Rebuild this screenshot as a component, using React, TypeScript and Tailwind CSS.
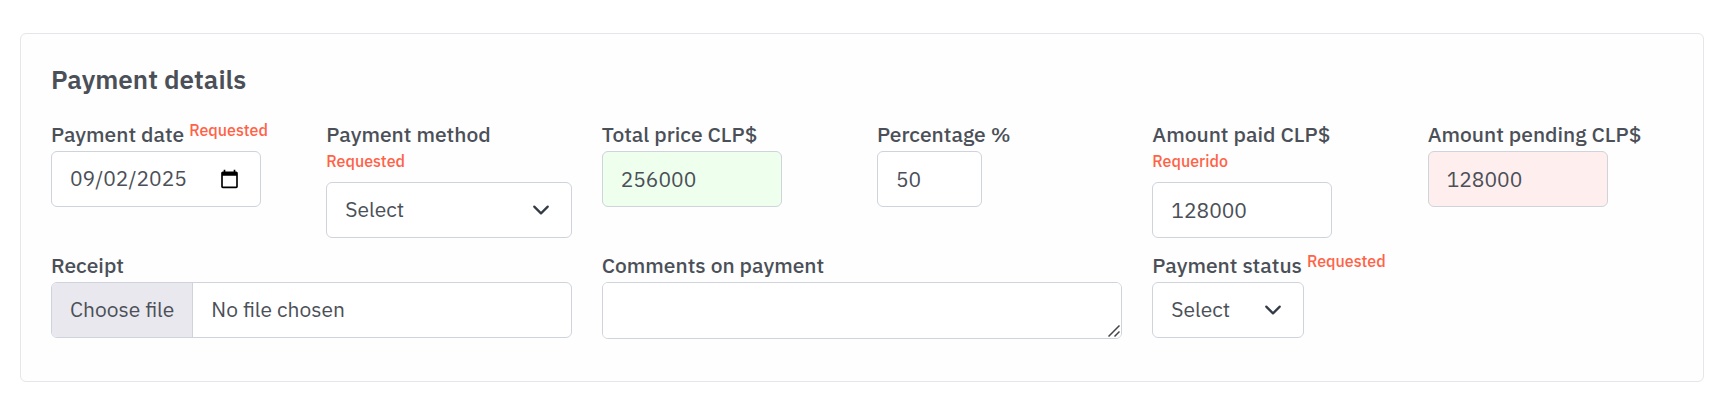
import { useState } from "react";
import type { ReactNode } from "react";
import clsx from "clsx";

const control =
  "block rounded-md border border-[#cfd3db] px-[18px] text-[21px] text-[#4b5058] outline-none focus:border-[#8a8fb0]";

const dateParts =
  "[&::-webkit-datetime-edit-fields-wrapper]:p-0 [&::-webkit-datetime-edit-month-field]:px-0 [&::-webkit-datetime-edit-day-field]:px-0 [&::-webkit-datetime-edit-year-field]:px-0";

type FieldProps = {
  id: string;
  label: string;
  note?: string;
  noteBelow?: boolean;
  className?: string;
  children: ReactNode;
};

function Field({ id, label, note, noteBelow, className, children }: FieldProps) {
  return (
    <div className={clsx("min-w-0", className)}>
      <label htmlFor={id} className="block pb-px text-[21px] leading-[31px] font-medium whitespace-nowrap">
        {label}
        {noteBelow ? <br /> : " "}
        {note && <sup className="-top-1.5 text-base leading-none text-[#ff6347]">{note}</sup>}
      </label>
      {children}
    </div>
  );
}

function Select({ id, options, className }: { id: string; options: string[]; className?: string }) {
  return (
    <div className={clsx("relative", className)}>
      <select id={id} className={clsx(control, "h-14 w-full appearance-none bg-white pr-12")}>
        <option value="">Select</option>
        {options.map((option) => (
          <option key={option}>{option}</option>
        ))}
      </select>
      <svg
        viewBox="0 0 16 16"
        aria-hidden="true"
        className="pointer-events-none absolute inset-y-0 right-[22px] my-auto size-[18px]"
      >
        <path
          d="m2 5 6 6 6-6"
          fill="none"
          stroke="#343a46"
          strokeWidth="2"
          strokeLinecap="round"
          strokeLinejoin="round"
        />
      </svg>
    </div>
  );
}

function FileInput({ id }: { id: string }) {
  const [name, setName] = useState("No file chosen");
  return (
    <div className="relative flex h-14 items-stretch overflow-hidden rounded-md border border-[#cfd3db] bg-white text-[21px]">
      <span className="flex items-center border-r border-[#cfd3db] bg-[#e9e8ee] px-[18px]">Choose file</span>
      <span className="flex items-center truncate px-[18px]">{name}</span>
      <input
        id={id}
        type="file"
        className="absolute inset-0 size-full cursor-pointer opacity-0"
        onChange={(event) => setName(event.target.files?.[0]?.name ?? "No file chosen")}
      />
    </div>
  );
}

export default function App() {
  return (
    <main className="bg-white py-[33px] pr-7 pl-5 font-['IBM_Plex_Sans','Inter',sans-serif] text-[#4b5058]">
      <form className="rounded-md border border-[#e6e6ea] bg-[#fefefe] px-[30px] pt-[30px] pb-[42px]">
        <h2 className="mb-[25px] text-[26px] leading-[30px] font-semibold">Payment details</h2>
        <div className="grid grid-cols-6 gap-x-[30px] gap-y-3">
          <Field id="date" label="Payment date" note="Requested">
            <input
              id="date"
              type="date"
              defaultValue="2025-09-02"
              className={clsx(control, dateParts, "h-14 w-[210px] bg-white")}
            />
          </Field>
          <Field id="method" label="Payment method" note="Requested" noteBelow>
            <Select id="method" options={["Cash", "Card", "Transfer"]} />
          </Field>
          <Field id="total" label="Total price CLP$">
            <input
              id="total"
              type="text"
              defaultValue="256000"
              className={clsx(control, "h-14 w-[180px] bg-[#eeffee]")}
            />
          </Field>
          <Field id="percentage" label="Percentage %">
            <input id="percentage" type="text" defaultValue="50" className={clsx(control, "h-14 w-[105px] bg-white")} />
          </Field>
          <Field id="paid" label="Amount paid CLP$" note="Requerido" noteBelow>
            <input id="paid" type="text" defaultValue="128000" className={clsx(control, "h-14 w-[180px] bg-white")} />
          </Field>
          <Field id="pending" label="Amount pending CLP$">
            <input
              id="pending"
              type="text"
              defaultValue="128000"
              className={clsx(control, "h-14 w-[180px] bg-[#ffeeee]")}
            />
          </Field>
          <Field id="receipt" label="Receipt" className="col-span-2">
            <FileInput id="receipt" />
          </Field>
          <Field id="comments" label="Comments on payment" className="col-span-2">
            <div className="relative">
              <textarea
                id="comments"
                rows={1}
                className={clsx(control, "h-[57px] w-full bg-white py-3 [&::-webkit-resizer]:hidden")}
              />
              <svg
                viewBox="0 0 12 12"
                aria-hidden="true"
                className="pointer-events-none absolute right-0.5 bottom-0.5 size-3"
              >
                <path d="M.5 11.5l11-11M6.5 11.5l5-5" fill="none" stroke="#45454a" strokeWidth="1.5" />
              </svg>
            </div>
          </Field>
          <Field id="status" label="Payment status" note="Requested" className="col-span-2">
            <Select id="status" options={["Paid", "Pending"]} className="w-[152px]" />
          </Field>
        </div>
      </form>
    </main>
  );
}
